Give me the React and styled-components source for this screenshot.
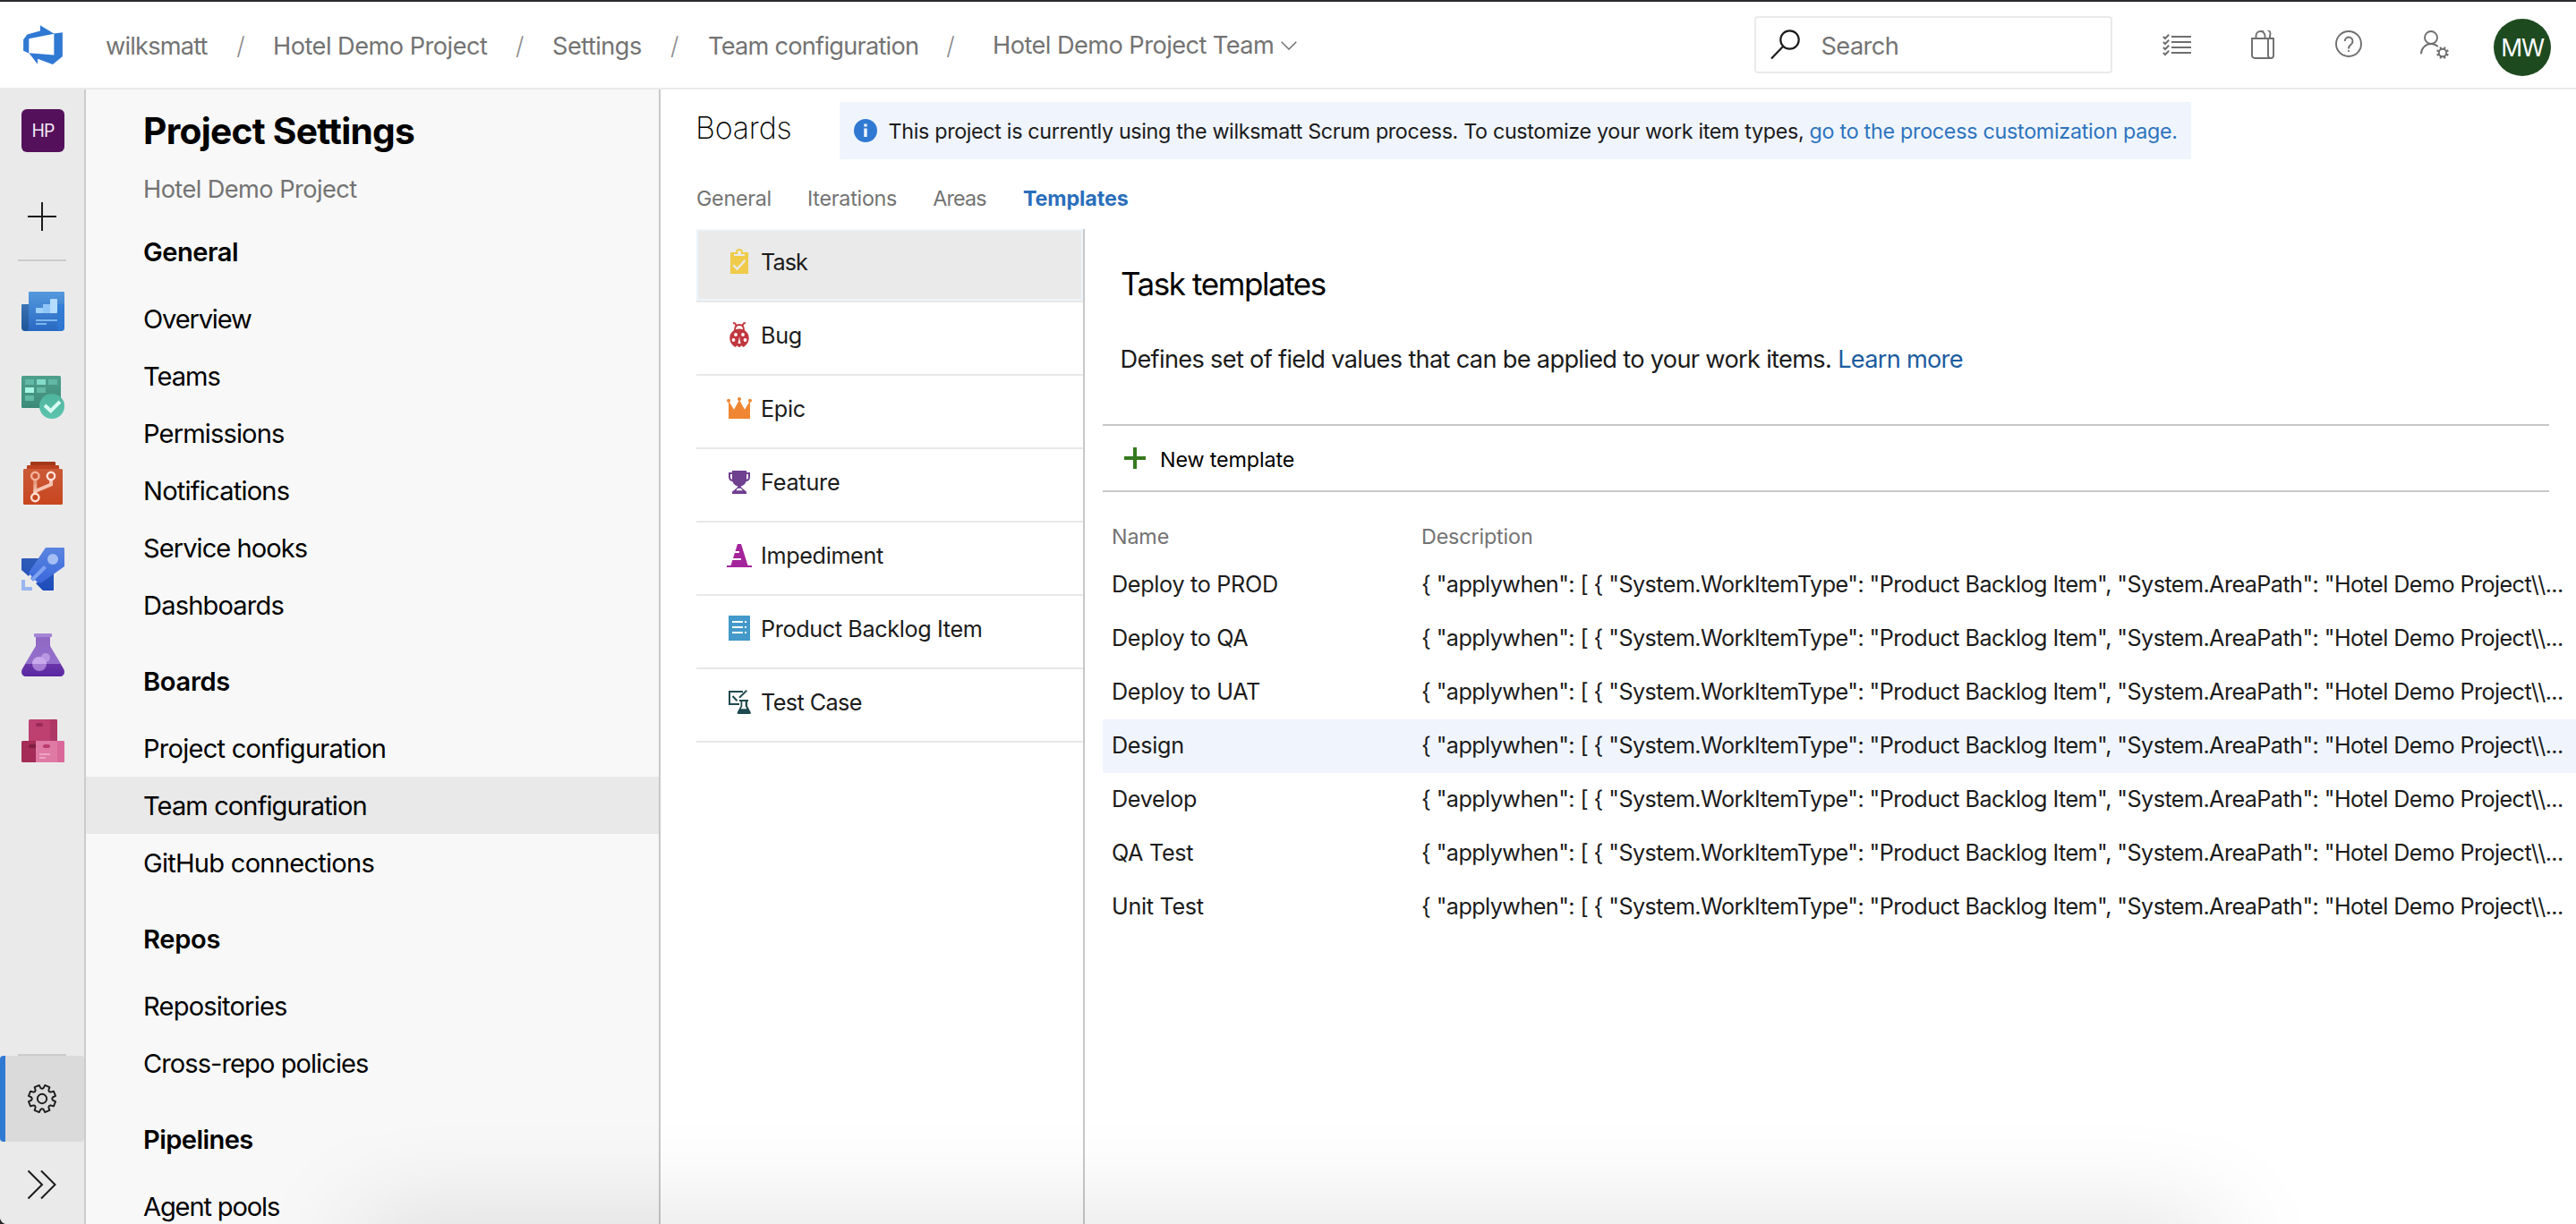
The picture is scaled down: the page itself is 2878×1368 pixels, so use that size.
import React from "react";
import styled, { createGlobalStyle, css } from "styled-components";

const GlobalStyle = createGlobalStyle`
  html, body { margin: 0; background: #28282c; }
  *, *::before, *::after { box-sizing: border-box; }
  body { font-family: Inter, "Liberation Sans", sans-serif; color: #1b1b1b; overflow: hidden; }
  h1, h2, h3, p, ul { margin: 0; padding: 0; font-size: inherit; font-weight: inherit; }
  ul { list-style: none; }
  svg { display: block; flex: none; }
`;

/* ---------- shell ---------- */

const Page = styled.div`
  position: relative;
  width: 2878px;
  height: 1368px;
  display: flex;
  flex-direction: column;
  background: #fff;
  border-top: 2px solid #2b2b2f;
  border-bottom-left-radius: 8px;
  overflow: hidden;
`;

const Body = styled.div`
  flex: 1;
  min-height: 0;
  display: flex;
`;

const BottomShadow = styled.div`
  position: absolute;
  left: 400px;
  right: 400px;
  top: 1366px;
  height: 80px;
  box-shadow: 0 0 120px rgba(0, 0, 0, 0.15);
`;

/* ---------- header ---------- */

const Header = styled.header`
  height: 98px;
  flex: none;
  display: flex;
  align-items: center;
  border-bottom: 2px solid #eaeaea;
  padding-left: 23px;
  color: #737373;
  font-size: 27.2px;
`;

const Breadcrumb = styled.ul`
  display: flex;
  margin-left: 45px;
  padding-top: 4px;
  line-height: 40px;
`;

const Crumb = styled.li`
  display: flex;
  white-space: nowrap;
  width: ${(p) => p.$width}px;
  padding-right: ${(p) => p.$end}px;
  letter-spacing: ${(p) => p.$track}em;
`;

const Slash = styled.span`
  margin-left: auto;
  font-weight: 300;
  color: #8c8c8c;
`;

const TeamPicker = styled.div`
  display: flex;
  align-items: center;
  gap: 8px;
  height: 38px;
  letter-spacing: -0.0204em;
  white-space: nowrap;
`;

const SearchBox = styled.div`
  margin-left: auto;
  width: 400px;
  height: 64px;
  margin-top: -1px;
  border: 2px solid #eaeaea;
  border-radius: 4px;
  display: flex;
  align-items: center;
  gap: 22.5px;
  padding: 0 16px;
  letter-spacing: -0.0216em;
  span { padding-top: 4px; }
`;

const HeaderActions = styled.div`
  display: flex;
  align-items: center;
  margin-left: 24px;
  padding-right: 28px;
`;

const HeaderButton = styled.div`
  width: 96px;
  height: 64px;
  display: flex;
  align-items: center;
  justify-content: center;
`;

const Avatar = styled.div`
  width: 64px;
  height: 64px;
  margin-left: 18px;
  margin-top: 5px;
  border-radius: 50%;
  background: #1e4a20;
  color: #fff;
  display: flex;
  align-items: center;
  justify-content: center;
  font-size: 26.5px;
  letter-spacing: -0.05em;
`;

/* ---------- icon rail ---------- */

const Rail = styled.nav`
  width: 96px;
  flex: none;
  background: #eaeaea;
  border-right: 2px solid #cccccc;
  display: flex;
  flex-direction: column;
`;

const RailCell = styled.div`
  position: relative;
  height: ${(p) => p.$height || 96}px;
  padding-left: ${(p) => p.$shift || 0}px;
  padding-top: ${(p) => p.$drop || 0}px;
  display: flex;
  align-items: center;
  justify-content: center;
  ${(p) =>
    p.$active &&
    css`
      background: #dadada;
      border-radius: 4px;
      overflow: hidden;
      &::before {
        content: "";
        position: absolute;
        inset: 0 auto 0 0;
        width: 6px;
        background: #3079d3;
      }
    `}
`;

const RailDivider = styled.div`
  width: 54px;
  height: 2px;
  flex: none;
  margin: ${(p) => p.$margin || "0"};
  background: #cccccc;
`;

const ProjectBadge = styled.div`
  width: 48px;
  height: 48px;
  border-radius: 6px;
  background: #54105a;
  color: #f3e9f4;
  font-size: 19.4px;
  letter-spacing: -0.04em;
  display: flex;
  align-items: center;
  justify-content: center;
`;

/* ---------- settings navigation ---------- */

const SettingsNav = styled.aside`
  width: 642px;
  flex: none;
  background: #f8f8f8;
  border-right: 2px solid #c8c8c8;
  color: #000;
  font-size: 29.1px;
`;

const SettingsTitle = styled.h1`
  padding: 22px 0 0 64px;
  font-size: 40.7px;
  line-height: 50px;
  font-weight: 700;
  letter-spacing: -0.0179em;
`;

const SettingsSubtitle = styled.p`
  padding: 20px 0 0 64px;
  height: 56px;
  font-size: 27.2px;
  line-height: 40px;
  letter-spacing: -0.021em;
  color: #737373;
`;

const GroupTitle = styled.h2`
  height: 96px;
  padding: 32px 0 0 64px;
  line-height: 43px;
  font-weight: 600;
  letter-spacing: ${(p) => p.$track}em;
`;

const NavItem = styled.li`
  height: 64px;
  line-height: 66px;
  padding-left: 64px;
  white-space: nowrap;
  letter-spacing: ${(p) => p.$track}em;
  background: ${(p) => (p.$selected ? "#e9e9e9" : "transparent")};
`;

/* ---------- main area ---------- */

const Main = styled.main`
  flex: 1;
  min-width: 0;
  display: flex;
  flex-direction: column;
  padding: 14px 0 0 40px;
`;

const HubHeader = styled.div`
  display: flex;
  height: 64px;
`;

const HubTitle = styled.h1`
  width: 160px;
  margin-left: -1px;
  margin-right: 1px;
  font-size: 34px;
  line-height: 58px;
  font-weight: 200;
  letter-spacing: -0.006em;
  color: #000;
`;

const InfoBar = styled.div`
  width: 1510px;
  padding: 0 0 0 16px;
  display: flex;
  align-items: center;
  background: #f0f5fd;
  font-size: 23.3px;
  letter-spacing: -0.0145em;
  white-space: nowrap;
  p { margin-left: 12.6px; }
`;

const Link = styled.a`
  color: ${(p) => p.$color || "#2e74bd"};
  letter-spacing: ${(p) => p.$track}em;
`;

const Tabs = styled.div`
  display: flex;
  gap: 40px;
  height: 78px;
  padding-top: 8px;
  align-items: center;
  font-size: 23.3px;
  color: #737373;
`;

const Tab = styled.span`
  letter-spacing: ${(p) => p.$track}em;
  ${(p) => p.$selected && "color: #2a6ebb; font-weight: 700; padding-left: 1px;"}
`;

const Split = styled.div`
  flex: 1;
  min-height: 0;
  display: flex;
`;

const TypeList = styled.ul`
  width: 434px;
  flex: none;
  border-right: 2px solid #c8c8c8;
`;

const TypeItem = styled.li`
  height: 82px;
  border-bottom: 2px solid #e8e8e8;
  padding: 22px 0 0 34px;
  display: flex;
  gap: 10px;
  align-items: flex-start;
  font-size: 25.2px;
  line-height: 30px;
  letter-spacing: ${(p) => p.$track}em;
  ${(p) => p.$selected && "background: #eaeaea; box-shadow: inset 0 0 0 2px #edf4fb;"}
`;

const Detail = styled.section`
  flex: 1;
  min-width: 0;
  padding: 36px 0 0 20px;
`;

const DetailTitle = styled.h2`
  padding-left: 20px;
  font-size: 35px;
  line-height: 50px;
  font-weight: 420;
  letter-spacing: -0.041em;
  color: #000;
`;

const DetailText = styled.p`
  margin: 40px 0 52px;
  padding-left: 19.5px;
  font-size: 27.2px;
  line-height: 40px;
  letter-spacing: -0.0252em;
`;

const Toolbar = styled.div`
  height: 76px;
  margin-right: 30px;
  padding: 0 0 0 24px;
  border: solid #c8c8c8;
  border-width: 2px 0;
  display: flex;
  align-items: center;
  gap: 16px;
  font-size: 23.3px;
  letter-spacing: -0.0055em;
  color: #000;
  span { padding-top: 2px; }
`;

const Columns = styled.div`
  display: grid;
  grid-template-columns: 346px 1fr;
  padding-left: 10px;
  white-space: nowrap;
`;

const TableHead = styled(Columns)`
  padding-top: 26px;
  font-size: 23.3px;
  line-height: 48px;
  letter-spacing: -0.0058em;
  color: #737373;
`;

const TableRow = styled(Columns)`
  height: 60px;
  font-size: 25.2px;
  line-height: 58px;
  background: ${(p) => (p.$highlighted ? "#f0f5fd" : "transparent")};
`;

const Cell = styled.span`
  letter-spacing: ${(p) => p.$track}em;
`;

/* ---------- icons ---------- */

const Logo = () => (
  <svg width="50" height="50" viewBox="0 0 16 16" fill="#3079d3">
    <path d="M15 3.622v8.512L11.5 15l-5.425-1.975v1.958L3.004 10.97l8.951.7V4.005L15 3.622zm-2.984.428L6.994 1v2.001L2.382 4.356 1 6.13v4.029l1.978.873V5.869l9.038-1.818z" />
  </svg>
);

const Chevron = () => (
  <svg width="18" height="10" viewBox="0 0 18 10" fill="none" stroke="#737373" strokeWidth="1.5">
    <path d="M.7.7 9 9 17.3.7" />
  </svg>
);

const Magnifier = () => (
  <svg width="34" height="34" viewBox="0 0 34 34" fill="none" stroke="#1b1b1b" strokeWidth="2.2">
    <circle cx="21.5" cy="11.5" r="10.2" />
    <path d="M14 19 1 32.4" />
  </svg>
);

const ListIcon = () => (
  <svg width="32" height="32" viewBox="0 0 32 32" fill="none" stroke="#6e6e6e" strokeWidth="2">
    {[7, 13, 19, 25].map((y) => (
      <path key={y} d={`M10 ${y}h22M.8 ${y}l2.2 2 4.2-4.2`} />
    ))}
  </svg>
);

const BagIcon = () => (
  <svg width="26" height="32" viewBox="0 0 26 32" fill="none" stroke="#6e6e6e" strokeWidth="1.9">
    <path d="M1 9h24v19a3 3 0 0 1-3 3H4a3 3 0 0 1-3-3zM19 9v19a3 3 0 0 0 3 3" />
    <path d="M5.5 9V6a5 5 0 0 1 10 0v3M12 1.8A4.8 4.8 0 0 1 21 5.8V9" />
  </svg>
);

const HelpIcon = () => (
  <svg width="30" height="32" viewBox="0 0 30 32" fill="none" stroke="#6e6e6e" strokeWidth="1.9">
    <circle cx="15" cy="15" r="14" />
    <path d="M10.7 12a4.4 4.4 0 1 1 7.5 3.1c-1.8 1.700-3.200 2.400-3.200 4.900v.6" />
    <circle cx="15" cy="23" r="1.1" fill="#6e6e6e" stroke="none" />
  </svg>
);

const PersonGearIcon = () => (
  <svg width="32" height="32" viewBox="0 0 32 32" fill="none" stroke="#6e6e6e" strokeWidth="1.9">
    <circle cx="12" cy="8" r="7" />
    <path d="M1 26.2A11.2 11.2 0 0 1 12 15c3 0 5.7 1 7.8 3.2" />
    <circle cx="25" cy="25" r="4.2" />
    {[22.5, 67.5, 112.5, 157.5, 202.5, 247.5, 292.5, 337.5].map((a) => (
      <path key={a} d="M25 20.5v-2.4" strokeWidth="2.2" transform={`rotate(${a} 25 25)`} />
    ))}
  </svg>
);

const gearPoints = Array.from({ length: 8 }, (_, i) => {
  const mid = 22.5 + i * 45;
  return [[-15, 12], [-10.5, 15.4], [10.5, 15.4], [15, 12], [22.5, 11.2]]
    .map(([offset, r]) => {
      const a = ((mid + offset) * Math.PI) / 180;
      return `${(17 + r * Math.sin(a)).toFixed(2)},${(17 - r * Math.cos(a)).toFixed(2)}`;
    })
    .join(" ");
}).join(" ");

const GearIcon = () => (
  <svg width="34" height="34" viewBox="0 0 34 34" fill="none" stroke="#1b1b1b" strokeWidth="1.9" strokeLinejoin="round">
    <polygon points={gearPoints} />
    <circle cx="17" cy="17" r="5.2" />
  </svg>
);

const RailPlus = () => (
  <svg width="32" height="32" viewBox="0 0 32 32" stroke="#1b1b1b" strokeWidth="2">
    <path d="M16 0v32M0 16h32" />
  </svg>
);

const ExpandIcon = () => (
  <svg width="34" height="34" viewBox="0 0 34 34" fill="none" stroke="#1b1b1b" strokeWidth="2">
    <path d="M1.5 1.5 17 17 1.5 32.5M16 1.5 31.5 17 16 32.5" />
  </svg>
);

const Gradient = ({ id, from, to }) => (
  <linearGradient id={id} x1="0" y1="0" x2="0" y2="1">
    <stop offset="0" stopColor={from} />
    <stop offset="1" stopColor={to} />
  </linearGradient>
);

const OverviewIcon = () => (
  <svg width="48" height="48" viewBox="0 -2 48 48">
    <defs>
      <Gradient id="ov-page" from="#5499dd" to="#2868c2" />
      <Gradient id="ov-roll" from="#3b74b4" to="#1f5499" />
    </defs>
    <path d="M1 14h11v30H4a4 4 0 0 1-4-4V15a1 1 0 0 1 1-1z" fill="url(#ov-roll)" />
    <path d="M9 0h38a1 1 0 0 1 1 1v39a4 4 0 0 1-4 4H4c3 0 4-2 4-4V1a1 1 0 0 1 1-1z" fill="url(#ov-page)" />
    <path d="M40 14h8v26a4 4 0 0 1-8 0z" fill="#2f7ad6" opacity=".7" />
    <path d="M16 18h8v6h-7a1 1 0 0 1-1-1z" fill="#9fd0fb" />
    <path d="M24 14h8v10h-8z" fill="#8fc5f7" />
    <path d="M33 8h6a1 1 0 0 1 1 1v14a1 1 0 0 1-1 1h-7V9a1 1 0 0 1 1-1z" fill="#b5dcff" />
    <path d="M16 31h24v2H16zM16 35h12v2H16z" fill="#7db5ee" />
  </svg>
);

const BoardsIcon = () => (
  <svg width="48" height="48" viewBox="0 0 48 48">
    <defs>
      <Gradient id="bd-board" from="#50a08c" to="#3c8a78" />
      <Gradient id="bd-disc" from="#4fb39c" to="#5cc5ae" />
    </defs>
    <rect width="44" height="36" rx="1.5" fill="url(#bd-board)" />
    <path d="M4 4h10v6H4zM30 4h10v6H30zM17 13h10v6H17zM4 22h10v6H4z" fill="#62b9a5" />
    <path d="M17 4h10v6H17z" fill="#84dcc8" />
    <path d="M4 13h10v6H4z" fill="#a6f5e5" />
    <circle cx="34" cy="34" r="14" fill="url(#bd-disc)" />
    <path d="m26 33 6.7 6.2L43 29" fill="none" stroke="#d6fbf3" strokeWidth="4" />
  </svg>
);

const ReposIcon = () => (
  <svg width="48" height="48" viewBox="0 0 48 48">
    <defs>
      <Gradient id="rp-main" from="#cb5a37" to="#c8461f" />
      <Gradient id="rp-stem" from="#e08e74" to="#f7c8b8" />
    </defs>
    <path d="M11 0h26a1 1 0 0 1 1 1v8H10V1a1 1 0 0 1 1-1z" fill="#a3391a" />
    <path d="M7 4h34a1 1 0 0 1 1 1v8H6V5a1 1 0 0 1 1-1z" fill="#bd4120" />
    <rect x="2" y="8" width="44" height="40" rx="1.5" fill="url(#rp-main)" />
    <path d="M13.3 20h4v16h-4z" fill="url(#rp-stem)" />
    <path d="M33 20v5.5L15.3 33v4" fill="none" stroke="#f5c3b1" strokeWidth="4" />
    <circle cx="15.3" cy="16" r="4.2" fill="none" stroke="#f3b29c" strokeWidth="2.4" />
    <circle cx="33" cy="16" r="4.2" fill="none" stroke="#fde0d6" strokeWidth="2.4" />
    <circle cx="15.3" cy="40" r="4.2" fill="#c8461f" stroke="#fde0d6" strokeWidth="2.4" />
  </svg>
);

const PipelinesIcon = () => (
  <svg width="48" height="48" viewBox="0 0 48 48">
    <defs>
      <Gradient id="pl-body" from="#5a85e0" to="#3a68dc" />
      <Gradient id="pl-wing" from="#2f5cb8" to="#1e4cba" />
    </defs>
    <path d="M1 12h21L8 32l-8-7V13a1 1 0 0 1 1-1zM36 28v19a1 1 0 0 1-1 1H24l-8-8z" fill="url(#pl-wing)" />
    <path d="M27 0h20a1 1 0 0 1 1 1v20L22 39.5l-4-.5-3-3-2 1.5-3-3 1.5-2L8 28z" fill="url(#pl-body)" />
    <path d="M26.500 21.500 12 36" stroke="#7fa3f0" strokeWidth="4" />
    <circle cx="35" cy="13" r="6" fill="#a5bef4" />
    <path d="M0 36h4v8h8v4H0z" fill="#9ab6f0" />
  </svg>
);

const TestPlansIcon = () => (
  <svg width="48" height="48" viewBox="0 0 48 48">
    <defs>
      <Gradient id="tp-glass" from="#8f68c4" to="#9470cc" />
      <Gradient id="tp-liquid" from="#6a35a8" to="#5a27a3" />
    </defs>
    <path d="M16 3h16v11l12 20H4l12-20z" fill="url(#tp-glass)" />
    <path d="M4.200 34h39.600l3.500 6c1.800 4-.3 8-4.300 8H5c-4 0-6.100-4-4.300-8z" fill="url(#tp-liquid)" />
    <rect x="14" y="0" width="20" height="4" rx=".8" fill="#a684d6" />
    <circle cx="20" cy="34" r="8" fill="#c9a8ee" opacity=".65" />
    <path d="M12 34a8 8 0 0 1 16 0z" fill="#d9bff5" opacity=".5" />
    <circle cx="27" cy="27" r="5" fill="#c5a6ea" opacity=".75" />
  </svg>
);

const ArtifactsIcon = () => (
  <svg width="48" height="48" viewBox="0 0 48 48">
    <rect x="8" y="0" width="32" height="25" rx="1.5" fill="#bd4071" />
    <path d="M32 0h6.500A1.500 1.500 0 0 1 40 1.500V24h-8z" fill="#ad3765" />
    <rect x="16" y="4" width="8" height="4" rx="2" fill="#992a55" />
    <path d="M1.500 24H16v24H1.500A1.500 1.500 0 0 1 0 46.500v-21A1.500 1.500 0 0 1 1.500 24z" fill="#a42c57" />
    <path d="M10 28h6v4h-6a2 2 0 0 1 0-4z" fill="#7f1e40" />
    <path d="M16 24h30.500a1.500 1.500 0 0 1 1.500 1.500v21a1.500 1.500 0 0 1-1.500 1.500H16z" fill="#df7aa4" />
    <path d="M40 24h6.500a1.500 1.500 0 0 1 1.500 1.500v21a1.500 1.500 0 0 1-1.500 1.500H40z" fill="#d9699a" />
    <rect x="24" y="28" width="8" height="4" rx="2" fill="#bb3c6d" />
    <path d="M20 38h12v2H20zM20 42h7v2h-7z" fill="#f0a3c2" />
  </svg>
);

const InfoIcon = () => (
  <svg width="26" height="26" viewBox="0 0 26 26">
    <circle cx="13" cy="13" r="13" fill="#3079d3" />
    <path d="M11.300 10.500h3.400V20h-3.400zM11.300 5.500h3.400v3h-3.400z" fill="#f0f5fd" />
  </svg>
);

const AddIcon = () => (
  <svg width="24" height="24" viewBox="0 0 24 24" stroke="#36791f" strokeWidth="4">
    <path d="M12 0v24M0 12h24" />
  </svg>
);

const TypeSvg = ({ children, color }) => (
  <svg width="28" height="28" viewBox="0 0 28 28" fill={color} stroke="none">
    {children}
  </svg>
);

const TaskIcon = () => (
  <TypeSvg color="#efcb49">
    <path d="M4 4h20v24H4z" />
    <path d="M10 7V4a4 4 0 0 1 8 0v3z" />
    <path d="M8 6h4V4a2 2 0 0 1 4 0v2h4v2H8z" fill="#eaeaea" />
    <path d="m7.300 18.300 4.200 4.500 9-10" fill="none" stroke="#eaeaea" strokeWidth="2.4" />
  </TypeSvg>
);

const BugIcon = () => (
  <TypeSvg color="#c0373f">
    <path d="M14 7.500c6 0 10.700 4.300 10.700 10.200 0 4-2.200 8-6.200 10.300l-2-1.800-2 1.800h-1l-2-1.800-2 1.800c-4-2.300-6.200-6.300-6.200-10.300C3.300 11.800 8 7.500 14 7.500z" />
    <path d="M9 9c0-4 2-6 5-6s5 2 5 6M10.500 3.600 8.300.5M17.500 3.600 19.700.5M8.300.8 7 1.500M19.700.8l1.300.7" fill="none" stroke="#c0373f" strokeWidth="1.9" />
    <g fill="#fff">
      <circle cx="10" cy="14" r="1.9" />
      <circle cx="18" cy="14" r="1.9" />
      <circle cx="7.5" cy="20" r="1.9" />
      <circle cx="20.5" cy="20" r="1.9" />
      <path d="M14 16.500 15.500 24h-3z" />
    </g>
  </TypeSvg>
);

const EpicIcon = () => (
  <TypeSvg color="#f08632">
    <path d="M2 26V6l6 9.700L14 5l6 10.700L26 6v20z" />
    <circle cx="2" cy="5.800" r="2" />
    <circle cx="14" cy="4" r="2" />
    <circle cx="26" cy="5.800" r="2" />
  </TypeSvg>
);

const FeatureIcon = () => (
  <TypeSvg color="#6f3f90">
    <path d="M6 2h16v10c0 4-3.500 7.500-8 7.500S6 16 6 12z" />
    <path d="M7 5H3v4c0 2.500 1.500 4 4 4M21 5h4v4c0 2.500-1.500 4-4 4" fill="none" stroke="#6f3f90" strokeWidth="2" />
    <path d="M12.500 18.500h3l1 2.500 3.500 3 2 1.500V28H6v-2.500L8 24l3.500-3z" />
    <path d="M10.500 24.200c.6-1.800 1.900-2.400 3.500-2.400s2.900.6 3.500 2.400z" fill="#fff" />
  </TypeSvg>
);

const ImpedimentIcon = () => (
  <TypeSvg color="#a4249a">
    <path d="M12 2h4l7.500 24H28v2H0v-2h4.500z" />
    <path d="M8.500 10H14v2H7.800zM6 18h10v2H5.400z" fill="#fff" />
  </TypeSvg>
);

const BacklogIcon = () => (
  <TypeSvg color="#4399c9">
    <path d="M2 0h24v28H2z" />
    <path d="M6 6h12v2H6zM20 6h2v2h-2zM6 12h12v2H6zM20 12h2v2h-2zM6 18h12v2H6zM20 18h2v2h-2z" fill="#fff" />
  </TypeSvg>
);

const TestCaseIcon = () => (
  <TypeSvg color="#1e4a4f">
    <path d="M18 3H3v14h11M6.500 8l5 5.300M14 9.800l8.300-8.200" fill="none" stroke="#1e4a4f" strokeWidth="2" />
    <path d="M14 12h10v2h-1v5l3.700 7c.5 1-.1 2-1.200 2H13c-1.100 0-1.700-1-1.200-2l3.700-7v-5H14z" />
    <path d="M17.300 14h3.400v5.200l1.600 3h-6.600l1.600-3z" fill="#fff" />
  </TypeSvg>
);

/* ---------- data ---------- */

const crumbs = [
  { label: "wilksmatt", width: 187, end: 32, track: -0.0294 },
  { label: "Hotel Demo Project", width: 312, end: 32, track: -0.0192 },
  { label: "Settings", width: 174, end: 33, track: -0.0196 },
  { label: "Team configuration", width: 318, end: 43, track: -0.0278 },
];

const railIcons = [OverviewIcon, BoardsIcon, ReposIcon, PipelinesIcon, TestPlansIcon, ArtifactsIcon];

const groups = [
  {
    title: "General",
    track: -0.0171,
    items: [
      ["Overview", -0.0404],
      ["Teams", -0.036],
      ["Permissions", -0.03],
      ["Notifications", -0.027],
      ["Service hooks", -0.033],
      ["Dashboards", -0.029],
    ],
  },
  {
    title: "Boards",
    track: -0.0113,
    items: [
      ["Project configuration", -0.0265],
      ["Team configuration", -0.0317],
      ["GitHub connections", -0.0261],
    ],
  },
  {
    title: "Repos",
    track: -0.011,
    items: [
      ["Repositories", -0.028],
      ["Cross-repo policies", -0.0327],
    ],
  },
  { title: "Pipelines", track: -0.0201, items: [["Agent pools", -0.0396]] },
];

const tabs = [
  ["General", -0.0112],
  ["Iterations", -0.011],
  ["Areas", -0.0338],
  ["Templates", -0.0035],
];

const workItemTypes = [
  ["Task", TaskIcon, -0.038],
  ["Bug", BugIcon, -0.01],
  ["Epic", EpicIcon, -0.0127],
  ["Feature", FeatureIcon, -0.0076],
  ["Impediment", ImpedimentIcon, -0.0136],
  ["Product Backlog Item", BacklogIcon, -0.0145],
  ["Test Case", TestCaseIcon, -0.0235],
];

const templates = [
  "Deploy to PROD",
  "Deploy to QA",
  "Deploy to UAT",
  "Design",
  "Develop",
  "QA Test",
  "Unit Test",
];

const templateDescription =
  '{ "applywhen": [ { "System.WorkItemType": "Product Backlog Item", "System.AreaPath": "Hotel Demo Project\\\\...';

/* ---------- page ---------- */

export default function App() {
  return (
    <>
      <GlobalStyle />
      <Page>
        <Header>
          <Logo />
          <Breadcrumb>
            {crumbs.map((c) => (
              <Crumb key={c.label} $width={c.width} $end={c.end} $track={c.track}>
                {c.label}
                <Slash>/</Slash>
              </Crumb>
            ))}
            <TeamPicker>
              Hotel Demo Project Team
              <Chevron />
            </TeamPicker>
          </Breadcrumb>
          <SearchBox>
            <Magnifier />
            <span>Search</span>
          </SearchBox>
          <HeaderActions>
            <HeaderButton><ListIcon /></HeaderButton>
            <HeaderButton><BagIcon /></HeaderButton>
            <HeaderButton><HelpIcon /></HeaderButton>
            <HeaderButton><PersonGearIcon /></HeaderButton>
            <Avatar>MW</Avatar>
          </HeaderActions>
        </Header>
        <Body>
          <Rail>
            <RailCell $height={92} $shift={2}>
              <ProjectBadge>HP</ProjectBadge>
            </RailCell>
            <RailCell $height={98} $drop={2}>
              <RailPlus />
            </RailCell>
            <RailDivider $margin="0 0 8px 20px" />
            {railIcons.map((Icon, i) => (
              <RailCell key={i} $shift={2}>
                <Icon />
              </RailCell>
            ))}
            <RailDivider $margin="auto 0 0 20px" />
            <RailCell $active>
              <GearIcon />
            </RailCell>
            <RailCell $height={92} $drop={4}>
              <ExpandIcon />
            </RailCell>
          </Rail>
          <SettingsNav>
            <SettingsTitle>Project Settings</SettingsTitle>
            <SettingsSubtitle>Hotel Demo Project</SettingsSubtitle>
            {groups.map((g) => (
              <React.Fragment key={g.title}>
                <GroupTitle $track={g.track}>{g.title}</GroupTitle>
                <ul>
                  {g.items.map(([label, track]) => (
                    <NavItem key={label} $track={track} $selected={label === "Team configuration"}>
                      {label}
                    </NavItem>
                  ))}
                </ul>
              </React.Fragment>
            ))}
          </SettingsNav>
          <Main>
            <HubHeader>
              <HubTitle>Boards</HubTitle>
              <InfoBar>
                <InfoIcon />
                <p>
                  This project is currently using the wilksmatt Scrum process. To customize your work item types,{" "}
                  <Link $track={-0.0118}>go to the process customization page.</Link>
                </p>
              </InfoBar>
            </HubHeader>
            <Tabs>
              {tabs.map(([label, track]) => (
                <Tab key={label} $track={track} $selected={label === "Templates"}>
                  {label}
                </Tab>
              ))}
            </Tabs>
            <Split>
              <TypeList>
                {workItemTypes.map(([label, Icon, track]) => (
                  <TypeItem key={label} $track={track} $selected={label === "Task"}>
                    <Icon />
                    {label}
                  </TypeItem>
                ))}
              </TypeList>
              <Detail>
                <DetailTitle>Task templates</DetailTitle>
                <DetailText>
                  Defines set of field values that can be applied to your work items.{" "}
                  <Link $color="#1c5c9f" $track={-0.0265}>Learn more</Link>
                </DetailText>
                <Toolbar>
                  <AddIcon />
                  <span>New template</span>
                </Toolbar>
                <TableHead>
                  <span>Name</span>
                  <span>Description</span>
                </TableHead>
                {templates.map((name) => (
                  <TableRow key={name} $highlighted={name === "Design"}>
                    <Cell $track={-0.0125}>{name}</Cell>
                    <Cell $track={-0.0227}>{templateDescription}</Cell>
                  </TableRow>
                ))}
              </Detail>
            </Split>
          </Main>
        </Body>
        <BottomShadow />
      </Page>
    </>
  );
}
